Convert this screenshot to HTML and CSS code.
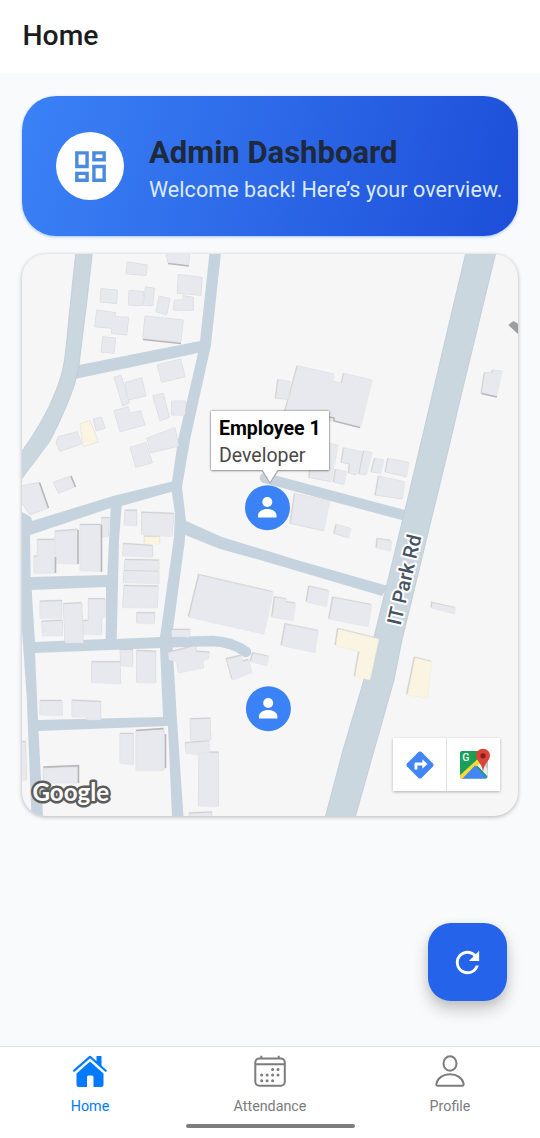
FILE: index.html
```html
<!DOCTYPE html>
<html lang="en">
<head>
<meta charset="utf-8">
<title>Home</title>
<link rel="stylesheet" href="styles.css">
</head>
<body>
<div class="app">
  <header class="topbar"><h1 class="topbar-title">Home</h1></header>

  <main class="content">
    <section class="hero">
      <div class="hero-badge">
        <svg class="hero-icon" viewBox="0 0 24 24"><path fill-rule="evenodd" d="M3 3h8v10H3zM5 5v6h4V5zM13 3h8v6h-8zM15 5v2h4V5zM13 11h8v10h-8zM15 13v6h4v-6zM3 15h8v6H3zM5 17v2h4v-2z"/></svg>
      </div>
      <div class="hero-text">
        <h2 class="hero-title">Admin Dashboard</h2>
        <p class="hero-sub">Welcome back! Here’s your overview.</p>
      </div>
    </section>

    <section class="map">
      <svg class="map-canvas" viewBox="22 254 496 562">
        <g class="roads">
          <path d="M209.5 253L200 341 79 365 75 379 198 353 178 440 172 481.5 113 496 32 521 31 517 22 512V630L26.700 697 31.500 817H43L38.500 731 168 726 172 817H183.500L177 720 172 637 185 540V535L220 549 260 560 382 596 388 586 297 560 222 537 186 521 182 487 190 440 211 345 221 253ZM30 535L110.700 508 107.300 575 30.700 577ZM31.700 590L106 587 105.700 639 35 642ZM121.700 506L171.700 491.700 175 513 174 537 160 637 116.700 639 119 540ZM35 653L160 648 163 717 38 720Z"/>
          <path class="lane" d="M160 642.500L213 641Q233 642 246 652"/>
          <path class="lane" d="M265 478L405 515.500"/>
        </g>
        <g class="avenue">
          <path d="M75.700 253L69 317 66 348Q64 372 55 393 44 421 20 454V481L50 441Q67 408 75 383L79 365 87 300 92.300 253Z"/>
          <path d="M466 252L431 400 405 510 375 633 363 683 343 750 325 818H355L394 680 402 640 449 447 460 400 496 252Z"/>
        </g>
        <g class="block cast-se">
          <path d="M165.700 252H190L188.500 265.500 168 263ZM127.300 262L147.300 265 146 275.500 126 273.700ZM101 288.500L117.500 290.300 116.500 303.500 100 302ZM129 290.500L143.500 291.500 142.700 305.500 128.500 305ZM145.500 286.800L154.300 288.300 152.700 305.500 143.500 305ZM159.300 296L170 298.700 166.700 315 156 311.700ZM178.300 274.500L202 277.300 201 295.300 177.300 293.300ZM174.300 300H182.500L183.300 295.700 193.300 297.300V310.500L173.300 310ZM96.700 310L115.700 312.700 114.700 316.700 128.700 317.300 126.700 335 111.300 333.300 112 328.300 94.700 326.700ZM145 316L183.300 320 180.700 342.500 142.700 338.300ZM102.700 336.700L115.700 338 114 353.300 101 352ZM157.300 365L180.700 359 185 376.700 161.700 382.300ZM114 377.300L121 375.300 129.300 403.300 122.700 405.700ZM125 382.700L141.700 377.700 146 396 128.300 400ZM152.700 395.700L163.300 393.300 169.300 417.300 160 420.700ZM171.700 401H185.700L185 415H171.700ZM114 410.700L128.300 406.700 130 413.300 140.700 410.700 145 425 120 431.700ZM93.300 419L101.700 417.300 105 428.300 96 430.700ZM58.300 436.700L77.300 431.700 81.700 444 60 451.300 56 443ZM146.700 438.300L175 427.700 178.700 446 151 452.700ZM130 447.300L146 442.700 152.300 462.700 135.700 467.300ZM53.300 482.300L70.700 476 75 486.700 58.300 493.300ZM22 485.700L39.300 482.300 48.300 507.700 30 515 22 503Z"/>
          <path class="shop" d="M80 424L90 420.700 98.300 441.700 83.300 446.700Z"/>
        </g>
        <path class="roof-edge" d="M143 339.500L181 343.500M39.500 482.500L48.500 508M71 476L75.500 487M168 263.500L189 266"/>
        <g class="block cast-ne">
          <path d="M125 510.700H136.700V526L124 525.300ZM141.700 512.700L174 514 172 536.700 141.700 535ZM123.300 544L152.700 546V557.300L122.700 556ZM125 560L159 560.700V570.700L124 570ZM124 571L159 571.500V584L123.300 582.700ZM124 586L158.300 586.700 157.300 608 122.700 607.700ZM136.700 613.300H155L154.300 624 136.700 623.300ZM101.700 518.300H109.300L108.300 537 101 536.700ZM80 525H101V571.700L80 570.700ZM55 531.700L77.300 530V564.300L55 563.300ZM37.300 540H55V573.300L34 574V556.700H37.300ZM40 601.700L61.700 601V618.300H40ZM41.700 621.700L62.300 620.700V636H42.700ZM63.300 604.300L81.700 603.300 83.300 643H65ZM88.300 599.300H105V616.700L101.700 618.300V635L83.300 634.300V621H88.300ZM91.700 662.300H120L120.700 684 91.700 682.700ZM120 650H132.700V666.700L120.700 666ZM136.700 651L155.700 651.700V683.300L136.700 682.700ZM40 701H61.700L62.300 716 40 715ZM72 700.700L100.700 702V720H86.700V717.300H72ZM120 734H133.300V765L120 763.300ZM136 731L163.300 729.300 165 738.300V768.300L163.300 770.700H136ZM43.300 768.300L77.700 767V783.300H43.300ZM18 742H25.500L26.500 780 18 781ZM171.700 630H190L189.300 637.300 171.700 636ZM168.300 652.700L195 646 196.700 651.700 209.300 652.700 208.300 659.300 202.700 660.700 203.300 668.300 178.300 673.300 176.700 661.700 169 660ZM190 719.300L210 718.700 211 740 190.700 740.700ZM185 743.300L209 741.300V753L198.300 755 186 753.300ZM199 752.700H218.300V806.700L198.300 806ZM189 813.500L211.700 812.500V818H189Z"/>
          <path class="shop" d="M144.300 536.700H159.700V544H144.300Z"/>
        </g>
        <path class="roof-edge" d="M101.500 525V572M78 530V564M55.500 557V573M136 730.500L163.500 728.500M165.500 734V768M43.500 767L78.500 765.500V783"/>
        <g class="block cast-nw">
          <path d="M199.300 575L273.300 592.300 264 634.300 189 617.300ZM275 597.300L286.700 599.300 286 602.300 295.700 603.300 293.300 620.700 272.300 617.300ZM309.300 586.700L329 591 326.700 606.700 306.700 602.300ZM333.300 597.700L371.700 605 368.300 626.700 329.300 619.300ZM285.700 624.300L318.300 631 315 652.700 281.700 645.700ZM226.700 659.300L241.700 655.700 243.300 661.700 249 660 252.300 672.700 232.700 680ZM253.300 653.300L269 656.700 266.700 666 250.700 661.700ZM432.300 602.700L455.700 608.300 454.300 614 431.700 608.300ZM377.700 539L391.700 541 391 551 376.700 548.300Z"/>
          <path class="shop" d="M338.300 629L379 639 370 680 355 676.700 359.300 651.700 335.700 645.700ZM415 657.700L431.700 661.700 427.300 698.300 407.300 695Z"/>
        </g>
        <g class="block cast-sw">
          <path d="M388.300 458.300L409.300 462.300 406.700 476.700 385.700 471.700ZM379 476L405 481.700 402.700 499 375.700 495ZM375 458.300L384 460 381 473.300 371.700 471.700ZM364 450.700L372.300 452.700 366.700 474.300 359.300 474ZM344 447.700L362.300 451.700 356.700 475 349 472.700 350 464 341.700 462.300ZM330 443.300L338.300 445 331.700 481.700 309.300 477.300 312 460ZM336 469.300L346.700 471.700 344.300 484.300 334 481.700ZM295 493.300L330 501 324 530.700 290.700 523.300ZM336.700 524.300L351 528.300 349 537.700 334.300 533.300ZM297.700 365.700L334 374 333.300 381 341.700 383.300 344 373.300 372.300 380 360.700 427.700 333 420.700 285 412ZM278.300 379.300L290.700 381.700 288.300 399.300 276 398.300ZM485 372.300L492 373 493 370 502.300 371 496.700 396.700 481.700 393.300Z"/>
        </g>
        <path class="roof-edge" d="M329 417L334 418V421L360 427.500M481.500 393.500L497 397"/>
        <path class="tower" d="M513.300 321L520 325V336L508.300 325Z"/>

        <text class="road-label" transform="translate(400.500 626) rotate(-76.800)" textLength="92" lengthAdjust="spacingAndGlyphs">IT Park Rd</text>
        <text class="map-brand" x="32.500" y="801" textLength="76.500" lengthAdjust="spacingAndGlyphs">Google</text>

        <g id="pin-one">
          <circle class="pin" cx="267.500" cy="507.700" r="22.500"/>
          <circle class="pin-glyph" cx="267.300" cy="502" r="5"/>
          <path class="pin-glyph" d="M258 517.500V515.500C258 511.500 262.500 509 267.300 509S276.500 511.500 276.500 515.500V517.500Z"/>
        </g>
        <use href="#pin-one" x="0.900" y="201"/>
      </svg>

      <div class="callout">
        <strong class="callout-name">Employee 1</strong>
        <span class="callout-role">Developer</span>
      </div>

      <div class="map-tools">
        <div class="map-tool">
          <svg class="tool-icon" viewBox="0 0 28 28"><path fill="#4285f4" d="M12.700 .8Q14 0 15.300 .8L27.200 12.700Q28 14 27.200 15.300L15.300 27.200Q14 28 12.700 27.200L.8 15.300Q0 14 .8 12.700Z"/><path fill="#fff" d="M8.500 18.500V12.500Q8.500 11.500 9.500 11.500H16.300V8.300L21.500 13 16.300 17.700V14.400H11.400V18.500Z"/></svg>
        </div>
        <div class="map-tool">
          <svg class="tool-icon tool-icon-maps" viewBox="0 0 31 31"><clipPath id="tile"><rect x="1" y="3" width="27.500" height="27.500" rx="2"/></clipPath><g clip-path="url(#tile)"><path fill="#1a9f58" d="M0 0H31V31H0Z"/><path fill="#c8cbd0" d="M17 16L31 4V31Z"/><path fill="#eceef1" d="M16 15L21 12 31 24V31Z"/><path fill="#fdd835" d="M-1 29L21 9V15L4 31H-1Z"/><path fill="#4285f4" d="M3 31L16 17.500 29 31Z"/></g><text class="tool-g" x="3.300" y="12.500">G</text><path fill="#db4437" d="M24 .7C20 .7 17 3.800 17 7.600 17 13 23.200 15 24 24 24.800 15 31 13 31 7.600 31 3.800 28 .7 24 .7Z"/><circle cx="24" cy="7.800" r="2.600" fill="#7b231c"/></svg>
        </div>
      </div>
    </section>
  </main>

  <button class="fab" aria-label="Refresh">
    <svg class="fab-icon" viewBox="0 0 24 24"><path d="M17.650 6.350C16.200 4.900 14.210 4 12 4c-4.420 0-7.990 3.580-7.990 8s3.570 8 7.990 8c3.730 0 6.840-2.550 7.730-6h-2.080c-.82 2.330-3.040 4-5.650 4-3.310 0-6-2.690-6-6s2.690-6 6-6c1.660 0 3.140.69 4.220 1.780L13 11h7V4l-2.350 2.350z"/></svg>
  </button>

  <nav class="tabs">
    <a class="tab tab-active">
      <svg class="tab-icon" viewBox="0 0 36 32"><path fill="currentColor" d="M18 6.500L31.500 18.500V29.500Q31.500 32 29 32H21.500V22Q21.500 20.500 20 20.500H16.500Q15 20.500 15 22V32H7Q4.500 32 4.500 29.500V18.500Z"/><path fill="none" stroke="currentColor" stroke-width="2.200" stroke-linecap="round" stroke-linejoin="round" d="M2.200 15.700L18 1.800 33.700 15.700"/><path fill="currentColor" d="M24.500 1H29.500V12L24.500 7.500Z"/></svg>
      <span class="tab-label">Home</span>
    </a>
    <a class="tab">
      <svg class="tab-icon" viewBox="0 0 36 32"><g fill="none" stroke="currentColor" stroke-width="2"><rect x="3.300" y="3.500" width="29.500" height="27.300" rx="4"/><path d="M3.300 9.300H32.800M9.300 .8V4M26.700 .8V4"/></g><path fill="none" stroke="currentColor" stroke-width="3" stroke-linecap="round" d="M20.600 14.500h.01M26 14.500h.01M9.700 20h.01M15.100 20h.01M20.600 20h.01M26 20h.01M9.700 25.700h.01M15.100 25.700h.01M20.600 25.700h.01"/></svg>
      <span class="tab-label">Attendance</span>
    </a>
    <a class="tab">
      <svg class="tab-icon" viewBox="0 0 36 32"><g fill="none" stroke="currentColor" stroke-width="2"><ellipse cx="18" cy="8.500" rx="6.500" ry="7.300"/><path d="M6 30.800Q4 30.800 4.400 28.500C5.500 23 11 19.300 18 19.300S30.500 23 31.600 28.500Q32 30.800 30 30.800Z"/></g></svg>
      <span class="tab-label">Profile</span>
    </a>
  </nav>
  <div class="home-bar"></div>
</div>
</body>
</html>
```
FILE: styles.css
```css
* { box-sizing: border-box; }
body { margin: 0; font-family: Roboto, "Noto Sans", sans-serif; background: #f8fafc; }
.app { position: relative; display: flex; flex-direction: column; width: 540px; height: 1138px; overflow: hidden; background: #f8fafc; }

.topbar { height: 73px; padding: 0 22.500px; background: #fff; display: flex; align-items: center; }
.topbar-title { margin: 0 0 1px; font-size: 28.300px; line-height: 34px; font-weight: 500; color: #1c1c1e; }

.content { flex: 1; display: flex; flex-direction: column; gap: 18px; padding: 23px 22px 0; }

.hero { height: 140px; flex: none; display: flex; align-items: center; gap: 25px; padding-left: 34px; border-radius: 34px; background: linear-gradient(105.800deg, #3b82f6, #1d4ed8); box-shadow: 0 1px 3px rgba(59, 130, 246, .45); }
.hero-badge { flex: none; width: 68px; height: 68px; border-radius: 50%; background: #fff; display: grid; place-items: center; }
.hero-icon { width: 41px; height: 41px; fill: #4a8be0; }
.hero-text { padding-top: 9px; white-space: nowrap; }
.hero-title { margin: 0; font-size: 31px; line-height: 38px; font-weight: 700; color: #1e293b; }
.hero-sub { margin: 0; font-size: 21.500px; letter-spacing: .08px; line-height: 36px; color: #dbeafe; }

.map { position: relative; flex: none; height: 562px; border-radius: 24px; overflow: visible; background: #f6f6f7; box-shadow: 0 1px 4px rgba(0, 0, 0, .28); }
.map-canvas { display: block; width: 496px; height: 562px; border-radius: 24px; }
.roads { fill: #c5d3de; }
.lane { fill: none; stroke: #c5d3de; stroke-width: 10.500; stroke-linecap: round; }
.avenue { fill: #cbd7df; stroke: #bdcad3; stroke-width: .8; }
.block { fill: #e8e9ee; stroke: #e0e0e4; stroke-width: .4; }
.shop { fill: #faf4e3; stroke: #f3e8cd; }
.cast-se { filter: drop-shadow(.7px .7px 0 #cbcbce); }
.cast-ne { filter: drop-shadow(.7px -.6px 0 #cbcbce); }
.cast-nw { filter: drop-shadow(-.4px -.6px 0 #cecece); }
.cast-sw { filter: drop-shadow(-.4px .7px 0 #cecece); }
.roof-edge { fill: none; stroke: #b8b8bb; stroke-width: 1.600; }
.tower { fill: #9d9e9f; }
.road-label { font: 500 20px Roboto, sans-serif; fill: #46525f; stroke: #fff; stroke-width: 4px; stroke-linejoin: round; paint-order: stroke; }
.map-brand { font-family: Lato, sans-serif; font-weight: 700; font-size: 25px; fill: #fff; stroke: #5c5c5c; stroke-width: 5px; stroke-linejoin: round; paint-order: stroke; }
.pin { fill: #3b82f6; }
.pin-glyph { fill: #fff; }

.callout { position: absolute; left: 189px; top: 157px; width: 118px; height: 59px; padding: 5px 0 0 8px; display: flex; flex-direction: column; background: #fff; box-shadow: 0 0 2px rgba(0, 0, 0, .55), 0 1px 2px rgba(0, 0, 0, .25); }
.callout::after { content: ""; position: absolute; left: 51px; top: 58px; width: 16px; height: 13px; background: #fff; clip-path: polygon(0 0, 100% 0, 50% 100%); }
.callout::before { content: ""; position: absolute; left: 50px; top: 59px; width: 18px; height: 14px; background: #aaa; clip-path: polygon(0 0, 100% 0, 50% 100%); }
.callout-name { font-size: 19.500px; line-height: 26px; font-weight: 700; color: #000; white-space: nowrap; }
.callout-role { font-size: 19.500px; line-height: 27px; color: #4a4a4a; }

.map-tools { position: absolute; right: 18px; bottom: 25px; display: flex; gap: 1px; width: 107px; height: 53px; background: #e2e2e2; box-shadow: 0 1px 3px rgba(0, 0, 0, .28); }
.map-tool { flex: 1; background: #fff; display: grid; place-items: center; }
.tool-icon { width: 28px; height: 28px; }
.tool-icon-maps { width: 31px; height: 31px; margin: -2px 0 0 2px; }
.tool-g { font: 500 10.500px Roboto, sans-serif; fill: #fff; }

.fab { position: absolute; left: 427.500px; top: 923px; width: 79px; height: 78px; padding: 0; border: 0; border-radius: 23px; background: #2563eb; display: grid; place-items: center; box-shadow: 0 9px 16px rgba(0, 0, 0, .2), 0 2px 8px rgba(0, 0, 0, .08); }
.fab-icon { width: 35px; height: 35px; fill: #fff; }

.tabs { flex: none; height: 92px; display: flex; background: #fff; border-top: 1px solid #e0e1e3; }
.tab { flex: 1; display: flex; flex-direction: column; align-items: center; padding-top: 8px; gap: 10px; color: #7c7c7d; }
.tab-active { color: #007aff; }
.tab-icon { width: 36px; height: 32px; }
.tab-label { font-size: 14.300px; line-height: 18px; }
.home-bar { position: absolute; left: 185.500px; top: 1124px; width: 169px; height: 4px; border-radius: 2px; background: #7e7e7e; }
```
